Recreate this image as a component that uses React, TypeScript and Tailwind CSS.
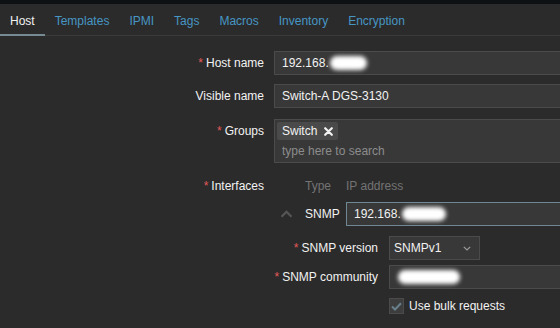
const tabs = ['Host', 'Templates', 'IPMI', 'Tags', 'Macros', 'Inventory', 'Encryption'];

const Blur = ({ w }: { w: number }) => (
  <span
    className="ml-[1px] inline-block h-[14px] rounded-full bg-white blur-[2px] align-middle"
    style={{ width: w }}
  />
);

const Label = ({ text, required, className = '' }: { text: string; required?: boolean; className?: string }) => (
  <div className={`shrink-0 text-right ${className}`}>
    {required && <span className="mr-[3px] text-[#e45959]">*</span>}
    {text}
  </div>
);

const inputCls = 'h-[24px] border border-[#4b4b4b] bg-[#383838] px-[7px] flex items-center';

const App = () => {
  return (
    <div
      className="h-[328px] w-[560px] overflow-hidden bg-[#2b2b2b] text-[12px] text-[#f2f2f2]"
      style={{ fontFamily: '"Liberation Sans", Arial, sans-serif' }}
    >
      <div className="h-[4px] bg-[#0d1113]" />
      <div className="flex h-[32px] border-b border-[#3b3b3b]">
        {tabs.map((t, i) => (
          <div
            key={t}
            className={`-mb-px flex items-center px-[10px] pt-[3px] ${
              i === 0 ? 'border-b-2 border-[#768a93] text-[#f2f2f2]' : 'border-b-2 border-transparent text-[#4796c4]'
            }`}
          >
            {t}
          </div>
        ))}
      </div>

      <div className="pt-[15px]">
        {/* Host name */}
        <div className="flex">
          <Label text="Host name" required className="w-[264px] leading-[24px]" />
          <div className={`ml-[10px] flex-1 -mr-[20px] ${inputCls}`}>
            192.168.<Blur w={37} />
          </div>
        </div>

        {/* Visible name */}
        <div className="mt-[9px] flex">
          <Label text="Visible name" className="w-[264px] leading-[24px]" />
          <div className={`ml-[10px] flex-1 -mr-[20px] ${inputCls}`}>Switch-A DGS-3130</div>
        </div>

        {/* Groups */}
        <div className="mt-[11px] flex">
          <Label text="Groups" required className="w-[264px] leading-[24px]" />
          <div className="ml-[10px] -mr-[20px] flex-1 border border-[#4b4b4b] bg-[#383838] px-[2px] pt-[2px] pb-[2px]">
            <div className="flex h-[18px] w-[61px] items-center justify-between rounded-[2px] bg-[#4a4a4a] pl-[5px] pr-[5px]">
              <span>Switch</span>
              <svg width="9" height="9" viewBox="0 0 9 9">
                <path d="M1.2 1.2 L7.8 7.8 M7.8 1.2 L1.2 7.8" stroke="#f2f2f2" strokeWidth="2.2" strokeLinecap="round" />
              </svg>
            </div>
            <div className="mt-[2px] h-[18px] pl-[5px] leading-[18px] text-[#8c8c8c]">type here to search</div>
          </div>
        </div>

        {/* Interfaces */}
        <div className="mt-[13px] flex">
          <Label text="Interfaces" required className="w-[264px] leading-[20px]" />
          <div className="ml-[10px] flex-1">
            <div className="flex h-[18px] leading-[20px] text-[#737373]">
              <div className="w-[31px]" />
              <div className="w-[41px]">Type</div>
              <div>IP address</div>
            </div>
            <div className="mt-[8px] flex h-[24px] items-center">
              <div className="flex w-[31px] justify-center pr-[6px]">
                <svg width="13" height="8" viewBox="0 0 13 8">
                  <path d="M1.5 6.8 L6.5 1.8 L11.5 6.8" stroke="#565656" strokeWidth="2.2" fill="none" />
                </svg>
              </div>
              <div className="w-[41px]">SNMP</div>
              <div className="-mr-[20px] flex h-[24px] flex-1 items-center border border-[#6f8893] bg-[#383838] px-[7px]">
                192.168.<Blur w={44} />
              </div>
            </div>

            {/* SNMP version */}
            <div className="mt-[10px] flex">
              <Label text="SNMP version" required className="w-[104px] leading-[24px]" />
              <div className="ml-[11px] flex h-[24px] w-[91px] items-center justify-between border border-[#4b4b4b] bg-[#383838] pl-[4px] pr-[8px]">
                <span>SNMPv1</span>
                <svg width="8" height="5" viewBox="0 0 8 5">
                  <path d="M0.8 0.8 L4 4 L7.2 0.8" stroke="#9a9a9a" strokeWidth="1.2" fill="none" />
                </svg>
              </div>
            </div>

            {/* SNMP community */}
            <div className="mt-[5px] flex">
              <Label text="SNMP community" required className="w-[104px] leading-[24px]" />
              <div className={`ml-[11px] flex-1 -mr-[20px] ${inputCls} px-[2px]`}>
                <Blur w={62} />
              </div>
            </div>

            {/* bulk */}
            <div className="mt-[8px] flex items-center">
              <div className="w-[115px]" />
              <div className="flex h-[16px] w-[15px] items-center justify-center border border-[#4b4b4b] bg-[#3d3d3d]">
                <svg width="11" height="9" viewBox="0 0 11 9">
                  <path d="M1 4.5 L4 7.5 L10 1.3" stroke="#68808c" strokeWidth="2" fill="none" />
                </svg>
              </div>
              <span className="ml-[5px]">Use bulk requests</span>
            </div>
          </div>
        </div>
      </div>
    </div>
  );
};

export default App;
